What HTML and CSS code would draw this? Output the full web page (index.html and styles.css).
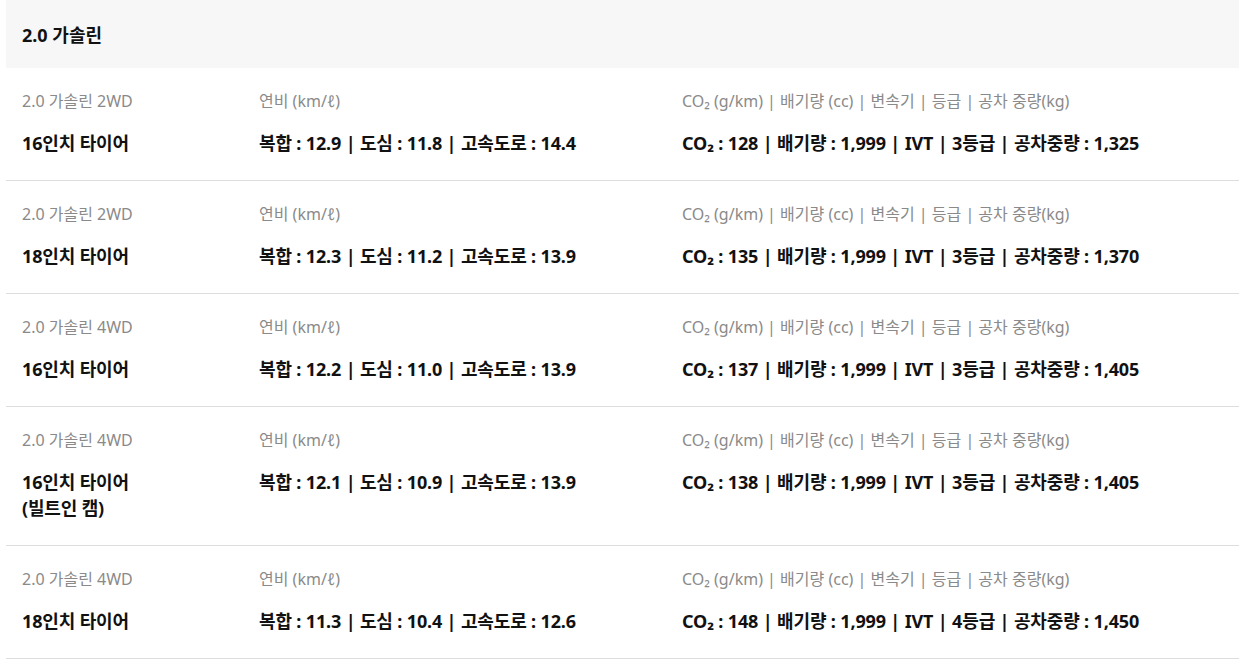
FILE: index.html
```html
<!DOCTYPE html>
<html lang="ko">
<head>
<meta charset="utf-8">
<link rel="stylesheet" href="styles.css">
</head>
<body>
<div class="page">
  <div class="group-title">2.0 가솔린</div>
  <div class="spec-row">
    <div class="cell">
      <div class="label">2.0 가솔린 2WD</div>
      <div class="value">16인치 타이어</div>
    </div>
    <div class="cell">
      <div class="label">연비 (km/ℓ)</div>
      <div class="value">복합 : 12.9 | 도심 : 11.8 | 고속도로 : 14.4</div>
    </div>
    <div class="cell">
      <div class="label">CO₂ (g/km) | 배기량 (cc) | 변속기 | 등급 | 공차 중량(kg)</div>
      <div class="value">CO₂ : 128 | 배기량 : 1,999 | IVT | 3등급 | 공차중량 : 1,325</div>
    </div>
  </div>
  <div class="spec-row">
    <div class="cell">
      <div class="label">2.0 가솔린 2WD</div>
      <div class="value">18인치 타이어</div>
    </div>
    <div class="cell">
      <div class="label">연비 (km/ℓ)</div>
      <div class="value">복합 : 12.3 | 도심 : 11.2 | 고속도로 : 13.9</div>
    </div>
    <div class="cell">
      <div class="label">CO₂ (g/km) | 배기량 (cc) | 변속기 | 등급 | 공차 중량(kg)</div>
      <div class="value">CO₂ : 135 | 배기량 : 1,999 | IVT | 3등급 | 공차중량 : 1,370</div>
    </div>
  </div>
  <div class="spec-row">
    <div class="cell">
      <div class="label">2.0 가솔린 4WD</div>
      <div class="value">16인치 타이어</div>
    </div>
    <div class="cell">
      <div class="label">연비 (km/ℓ)</div>
      <div class="value">복합 : 12.2 | 도심 : 11.0 | 고속도로 : 13.9</div>
    </div>
    <div class="cell">
      <div class="label">CO₂ (g/km) | 배기량 (cc) | 변속기 | 등급 | 공차 중량(kg)</div>
      <div class="value">CO₂ : 137 | 배기량 : 1,999 | IVT | 3등급 | 공차중량 : 1,405</div>
    </div>
  </div>
  <div class="spec-row">
    <div class="cell">
      <div class="label">2.0 가솔린 4WD</div>
      <div class="value">16인치 타이어<br>(빌트인 캠)</div>
    </div>
    <div class="cell">
      <div class="label">연비 (km/ℓ)</div>
      <div class="value">복합 : 12.1 | 도심 : 10.9 | 고속도로 : 13.9</div>
    </div>
    <div class="cell">
      <div class="label">CO₂ (g/km) | 배기량 (cc) | 변속기 | 등급 | 공차 중량(kg)</div>
      <div class="value">CO₂ : 138 | 배기량 : 1,999 | IVT | 3등급 | 공차중량 : 1,405</div>
    </div>
  </div>
  <div class="spec-row">
    <div class="cell">
      <div class="label">2.0 가솔린 4WD</div>
      <div class="value">18인치 타이어</div>
    </div>
    <div class="cell">
      <div class="label">연비 (km/ℓ)</div>
      <div class="value">복합 : 11.3 | 도심 : 10.4 | 고속도로 : 12.6</div>
    </div>
    <div class="cell">
      <div class="label">CO₂ (g/km) | 배기량 (cc) | 변속기 | 등급 | 공차 중량(kg)</div>
      <div class="value">CO₂ : 148 | 배기량 : 1,999 | IVT | 4등급 | 공차중량 : 1,450</div>
    </div>
  </div>
</div>
</body>
</html>
```

FILE: styles.css
```css
html, body {
  margin: 0;
  padding: 0;
  background: #ffffff;
}
body {
  font-family: "Noto Sans", "Noto Sans CJK KR", sans-serif;
  color: #111111;
}
.page {
  margin-left: 6px;
}
.group-title {
  background: #f7f7f7;
  height: 68px;
  padding-left: 16px;
  display: flex;
  align-items: center;
  font-size: 18px;
  font-weight: 700;
  color: #111;
}
.spec-row {
  display: grid;
  grid-template-columns: 237px 423px 1fr;
  padding: 22px 16px 24px 16px;
  border-bottom: 1px solid #dddddd;
}
.label {
  font-size: 16px;
  line-height: 22px;
  color: #8a8a8a;
  font-weight: 400;
}
.value {
  margin-top: 18px;
  font-size: 18px;
  line-height: 26px;
  font-weight: 700;
  color: #111;
  letter-spacing: -0.15px;
}
```
